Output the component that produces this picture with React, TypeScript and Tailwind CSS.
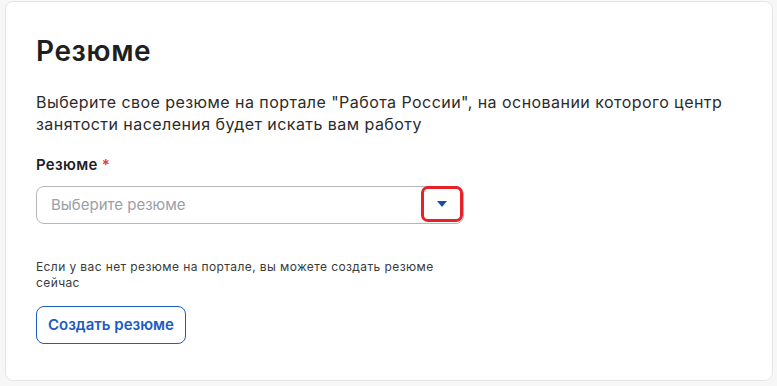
export default function App() {
  return (
    <div className="min-h-[386px] w-[777px] bg-[#f7f7f8] pt-px pl-[5px] pr-[4px] font-['Inter',sans-serif]">
      <section className="h-[380px] rounded-lg border border-[#e4e5e8] bg-white px-[30px] pt-[30px]">
        <h1 className="text-[28px] leading-[38px] font-semibold tracking-[0.6px] text-[#1f1f1f]">Резюме</h1>
        <p className="mt-[21px] w-[700px] text-[16px] leading-[22px] tracking-[0.45px] text-[#2b2b2b]">
          Выберите свое резюме на портале "Работа России", на основании которого центр занятости населения будет искать вам работу
        </p>
        <div className="mt-[19px] text-[15px] leading-[22px] font-semibold tracking-[0.3px] text-[#1f1f1f]">
          Резюме <span className="text-[#e0403a]">*</span>
        </div>
        <div className="relative mt-[10px] flex h-[38px] w-[428px] items-center rounded-lg border border-[#b4b7bd] pl-[14px]">
          <span className="text-[15px] text-[#9aa0a8]">Выберите резюме</span>
          <div className="absolute -top-px right-0 flex h-[36px] w-[42px] items-center justify-center rounded-[7px] border-[3px] border-[#e8202a]">
            <svg width="10" height="6" viewBox="0 0 10 6">
              <path d="M0 0h10L5 6z" fill="#1b4f9c" />
            </svg>
          </div>
        </div>
        <p className="mt-[35px] w-[400px] text-[12px] leading-[16px] tracking-[0.4px] text-[#3a3a3a]">
          Если у вас нет резюме на портале, вы можете создать резюме сейчас
        </p>
        <button className="mt-[15px] h-[38px] rounded-lg border border-[#1a5bc4] px-[11px] text-[15px] font-semibold text-[#1a5bc4]">
          Создать резюме
        </button>
      </section>
    </div>
  );
}
